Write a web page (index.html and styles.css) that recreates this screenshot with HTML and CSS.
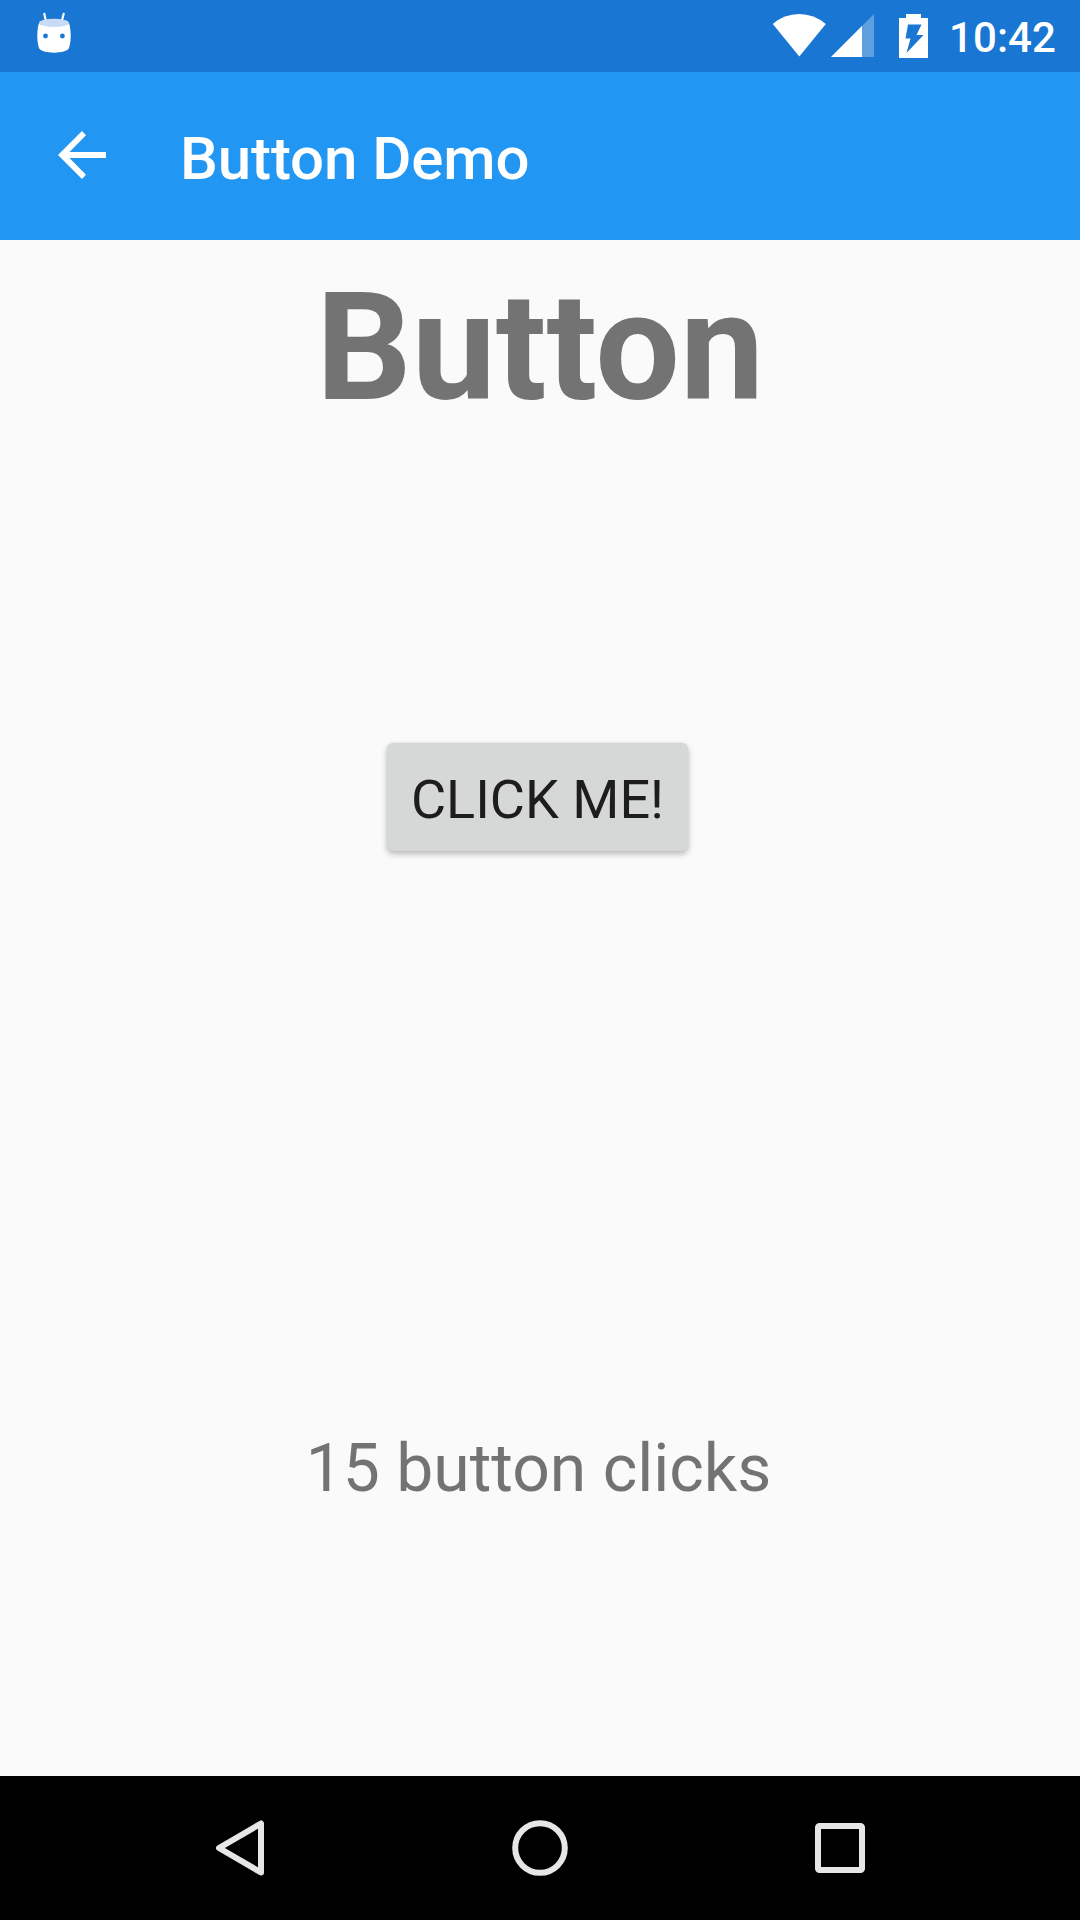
FILE: index.html
```html
<!DOCTYPE html>
<html lang="en">
<head>
<meta charset="utf-8">
<title>Button Demo</title>
<link rel="stylesheet" href="styles.css">
</head>
<body>
<div class="screen">
  <header class="status-bar">
    <svg class="icon-droid" width="34" height="42" viewBox="0 0 34 42">
      <path d="M7.300 1.800L9 9.500M26.700 1.800L24.700 9.500" stroke="#fff" stroke-width="2.200" stroke-linecap="round"/>
      <path d="M2 11C-.3 18 -.3 29 2 36C4 42.200 30 42.200 32 36C34.300 29 34.300 18 32 11C30 15.200 4 15.200 2 11Z" fill="#fff"/>
      <ellipse cx="17" cy="10.800" rx="15" ry="4" fill="#c7dbf4"/>
      <circle cx="8.500" cy="24" r="2.400" fill="#1976d2"/>
      <circle cx="25.400" cy="24" r="2.400" fill="#1976d2"/>
    </svg>
    <svg class="icon-wifi" width="54" height="43" viewBox="0 0 54 43">
      <path d="M27.300 42.500L.8 10Q12 0 27.300 0Q42 0 53.800 10Z" fill="#fff"/>
    </svg>
    <svg class="icon-signal" width="43" height="43" viewBox="0 0 43 43">
      <path d="M0 43L43 0V43Z" fill="#fff" fill-opacity=".3"/>
      <path d="M0 43L31 12V43Z" fill="#fff"/>
    </svg>
    <svg class="icon-battery" width="29" height="44" viewBox="0 0 29 44">
      <path d="M0 4H7V0H22V4H29V44H0Z" fill="#fff"/>
      <path d="M9 10.500H22.500L17.500 21H24.500L7.500 39L11.500 24.500H6.500Z" fill="#1976d2"/>
    </svg>
    <span class="clock">10:42</span>
  </header>
  <div class="app-bar">
    <svg class="icon-back" width="48" height="48" viewBox="0 0 48 48">
      <path d="M48 21V27H11.500L28 43.700L24 48L0 24L24 0L28 4.300L11.500 21Z" fill="#fff"/>
    </svg>
    <span class="app-title">Button Demo</span>
  </div>
  <main class="content">
    <h1 class="heading">Button</h1>
    <button class="click-button" type="button">CLICK ME!</button>
    <p class="count">15 button clicks</p>
  </main>
  <nav class="nav-bar">
    <svg width="56" height="56" viewBox="0 0 56 56"><path d="M49 3.500V52.500L7 28Z" class="nav-shape"/></svg>
    <svg width="56" height="56" viewBox="0 0 56 56"><circle cx="28" cy="28" r="24.800" class="nav-shape"/></svg>
    <svg width="56" height="56" viewBox="0 0 56 56"><rect x="6" y="6" width="44" height="44" rx="1.500" class="nav-shape"/></svg>
  </nav>
</div>
</body>
</html>
```

FILE: styles.css
```css
body {
  margin: 0;
  font-family: Roboto, sans-serif;
}

.screen {
  display: flex;
  flex-direction: column;
  width: 1080px;
  height: 1920px;
  background: #fafafa;
}

.status-bar {
  display: flex;
  align-items: flex-start;
  box-sizing: border-box;
  height: 72px;
  padding: 0 24px 0 37px;
  background: #1976d2;
}

.icon-droid {
  margin-top: 12px;
}

.icon-wifi {
  margin: 14px 0 0 auto;
}

.icon-signal {
  margin: 14px 0 0 5px;
}

.icon-battery {
  margin: 14px 21px 0 25px;
}

.clock {
  color: #fff;
  font-size: 42px;
  font-weight: 500;
  line-height: 76px;
  letter-spacing: 0.1px;
}

.app-bar {
  display: flex;
  align-items: flex-start;
  box-sizing: border-box;
  height: 168px;
  padding-left: 58px;
  background: #2196f3;
}

.icon-back {
  margin-top: 59px;
}

.app-title {
  margin: 51px 0 0 74px;
  color: #fff;
  font-size: 60px;
  font-weight: 500;
  line-height: 72px;
  letter-spacing: -0.1px;
}

.content {
  display: flex;
  flex: 1;
  flex-direction: column;
  align-items: center;
  padding-top: 20px;
  color: #737373;
}

.heading {
  margin: 0;
  font-size: 150px;
  font-weight: 700;
  line-height: 176px;
}

.click-button {
  box-sizing: border-box;
  width: 301px;
  height: 108px;
  margin: 307px 5px 0 0;
  padding: 5px 0 0;
  border: 0;
  border-radius: 6px;
  background: #d6d7d7;
  box-shadow: 0 3px 6px rgba(0, 0, 0, 0.26), 0 0 2px rgba(0, 0, 0, 0.08);
  color: #1d1d1d;
  font-family: inherit;
  font-size: 54px;
  white-space: nowrap;
}

.count {
  margin: 578px 3px 0 0;
  font-size: 66px;
  line-height: 80px;
}

.nav-bar {
  display: flex;
  justify-content: center;
  align-items: center;
  gap: 244px;
  height: 144px;
  background: #000;
}

.nav-shape {
  fill: none;
  stroke: #e6e6e6;
  stroke-width: 6;
  stroke-linejoin: round;
}
```
